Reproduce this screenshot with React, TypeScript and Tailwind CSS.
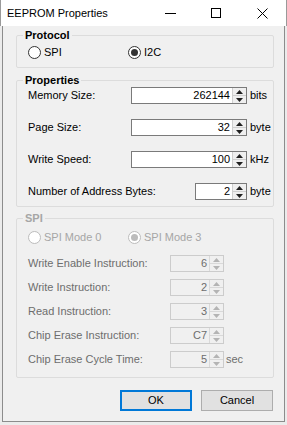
import React from "react";

const FONT = "font-['Liberation_Sans',Arial,sans-serif]";

function Arrow({ up, color }: { up?: boolean; color: string }) {
  return (
    <svg width="7" height="4" viewBox="0 0 7 4">
      <path d={up ? "M0 4 L3.5 0 L7 4 Z" : "M0 0 L3.5 4 L7 0 Z"} fill={color} />
    </svg>
  );
}

function Spin({ value, width, disabled }: { value: string; width: string; disabled?: boolean }) {
  const arrow = disabled ? "#b4b4b4" : "#202020";
  return (
    <div
      className={`flex h-[17px] border ${width} ${
        disabled ? "border-[#cccccc] bg-[#f0f0f0] text-[#6d6d6d]" : "border-[#7a7a7a] bg-white text-black"
      }`}
    >
      <div className="flex-1 text-right pr-[2px] leading-[15px]">{value}</div>
      <div className="flex flex-col w-[14px] my-[0px] mr-[0px]">
        <div
          className={`flex-1 flex items-center justify-center border-l border-b ${
            disabled ? "border-[#d9d9d9] bg-[#f0f0f0]" : "border-[#cfcfcf] bg-[#efefef]"
          }`}
        >
          <Arrow up color={arrow} />
        </div>
        <div
          className={`flex-1 flex items-center justify-center border-l ${
            disabled ? "border-[#d9d9d9] bg-[#f0f0f0]" : "border-[#cfcfcf] bg-[#efefef]"
          }`}
        >
          <Arrow color={arrow} />
        </div>
      </div>
    </div>
  );
}

function Radio({ label, checked, disabled }: { label: string; checked?: boolean; disabled?: boolean }) {
  const ring = disabled ? "border-[#bcbcbc]" : "border-[#333333]";
  return (
    <div className={`flex items-center gap-[3px] w-[100px] ${disabled ? "text-[#a6a6a6]" : "text-black"}`}>
      <div className={`w-[13px] h-[13px] rounded-full border bg-white flex items-center justify-center ${ring} ${disabled ? "bg-[#f0f0f0]" : ""}`}>
        {checked && <div className={`w-[7px] h-[7px] rounded-full ${disabled ? "bg-[#bcbcbc]" : "bg-[#333333]"}`} />}
      </div>
      <span className="leading-[13px]">{label}</span>
    </div>
  );
}

function Group({
  title,
  disabled,
  className,
  children,
}: {
  title: string;
  disabled?: boolean;
  className?: string;
  children: React.ReactNode;
}) {
  return (
    <fieldset className={`border border-[#dcdcdc] rounded-[2px] ${className ?? ""}`}>
      <legend className={`ml-[6px] px-[2px] font-bold leading-[13px] ${disabled ? "text-[#a6a6a6]" : "text-black"}`}>
        {title}
      </legend>
      <div className="pl-[11px]">{children}</div>
    </fieldset>
  );
}

export default function App() {
  const props = [
    { label: "Memory Size:", value: "262144", unit: "bits", w: "w-[116px]" },
    { label: "Page Size:", value: "32", unit: "byte", w: "w-[116px]" },
    { label: "Write Speed:", value: "100", unit: "kHz", w: "w-[116px]" },
    { label: "Number of Address Bytes:", value: "2", unit: "byte", w: "w-[52px]" },
  ];
  const spi = [
    { label: "Write Enable Instruction:", value: "6", unit: "" },
    { label: "Write Instruction:", value: "2", unit: "" },
    { label: "Read Instruction:", value: "3", unit: "" },
    { label: "Chip Erase Instruction:", value: "C7", unit: "" },
    { label: "Chip Erase Cycle Time:", value: "5", unit: "sec" },
  ];

  return (
    <div className={`w-[287px] h-[425px] bg-[#ebebeb] flex flex-col text-[11px] ${FONT}`}>
      {/* title bar */}
      <div className="h-[26px] bg-white flex items-center border-x border-[#9a9a9a]">
        <div className="flex-1 pl-[6px] text-[11px] text-black">EEPROM Properties</div>
        <div className="flex h-full mr-[1px]">
          <div className="w-[46px] flex items-center justify-center">
            <div className="w-[11px] h-[1px] bg-black" />
          </div>
          <div className="w-[46px] flex items-center justify-center">
            <div className="w-[10px] h-[10px] border border-black" />
          </div>
          <div className="w-[46px] flex items-center justify-center">
            <svg width="11" height="11" viewBox="0 0 11 11">
              <path d="M0.5 0.5 L10.5 10.5 M10.5 0.5 L0.5 10.5" stroke="black" strokeWidth="1" />
            </svg>
          </div>
        </div>
      </div>

      {/* client area */}
      <div className="mx-[2px] h-[396px] bg-[#f0f0f0] border-x border-b border-[#8c8c8c] pl-[13px] pr-[10px] flex flex-col">
        <Group title="Protocol" className="mt-[3px] pb-[8px]">
          <div className="flex mt-[4px] h-[13px]">
            <Radio label="SPI" />
            <Radio label="I2C" checked />
          </div>
        </Group>

        <Group title="Properties" className="mt-[6px] pb-[6px]">
          <div className="flex flex-col gap-[15px]">
            {props.map((p) => (
              <div key={p.label} className="flex items-center h-[17px]">
                <div className="flex-1">{p.label}</div>
                <Spin value={p.value} width={p.w} />
                <div className="w-[26px] pl-[3px]">{p.unit}</div>
              </div>
            ))}
          </div>
        </Group>

        <Group title="SPI" disabled className="mt-[5px] pb-[9px]">
          <div className="flex mt-[6px] h-[13px]">
            <Radio label="SPI Mode 0" disabled />
            <Radio label="SPI Mode 3" checked disabled />
          </div>
          <div className="flex flex-col gap-[7px] mt-[11px]">
            {spi.map((p) => (
              <div key={p.label} className="flex items-center h-[17px] text-[#6d6d6d]">
                <div className="flex-1">{p.label}</div>
                <Spin value={p.value} width="w-[54px]" disabled />
                <div className="w-[49px] pl-[2px]">{p.unit}</div>
              </div>
            ))}
          </div>
        </Group>

        <div className="flex justify-end gap-[9px] mt-[12px] pr-[1px]">
          <button className="w-[72px] h-[21px] bg-[#e1e1e1] border-2 border-[#0078d7] text-black leading-none">
            OK
          </button>
          <button className="w-[72px] h-[21px] bg-[#e1e1e1] border border-[#adadad] text-black leading-none">
            Cancel
          </button>
        </div>
      </div>
    </div>
  );
}
